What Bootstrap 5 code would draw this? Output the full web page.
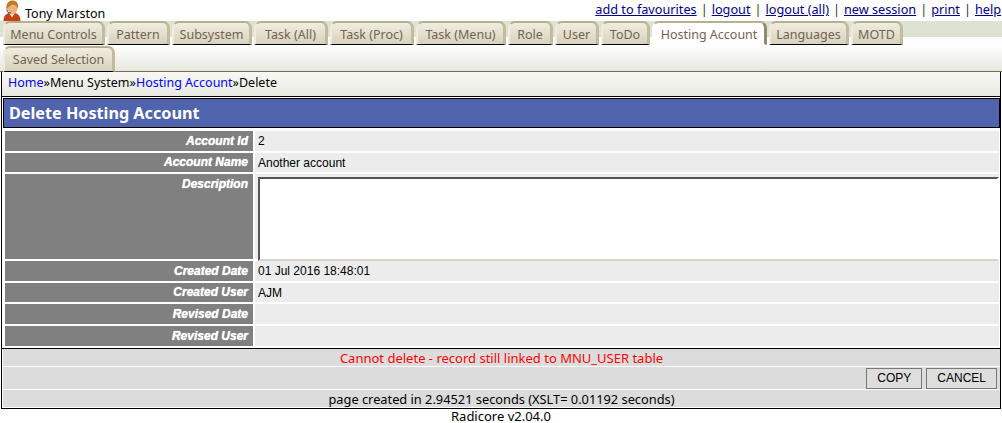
<!DOCTYPE html>
<html lang="en">
<head>
<meta charset="utf-8">
<title>Delete Hosting Account</title>
<link rel="stylesheet" href="https://cdn.jsdelivr.net/npm/bootstrap@5.3.0/dist/css/bootstrap.min.css">
<style>
html,body{background:#fff;}
body{font-family:"Noto Sans","DejaVu Sans",sans-serif;font-size:12.5px;line-height:16px;color:#000;height:423px;overflow:hidden;}
.topline{height:21px;}
.who{padding-left:3px;}
.who span{margin-left:4px;padding-top:6px;}
.toplinks{padding-right:1px;padding-top:1px;font-size:12.7px;}
.toplinks a{color:#00008b;}
.toplinks i{font-style:normal;margin:0 4px;color:#333;}
.tabstrip{position:relative;height:51px;background:linear-gradient(#dde3d3 0,#dde3d3 16px,#fff 16px,#fff 24px);background-repeat:no-repeat;background-size:100% 24px;}
.tabrow{position:relative;z-index:1;height:24px;padding-left:3px;}
.tabrow2{position:relative;z-index:1;height:26px;padding-left:3px;margin-top:1px;}
.tabitem{height:24px;padding:4px 0 0;margin-right:2px;color:#716353;text-align:center;white-space:nowrap;border-radius:7px 7px 0 0;border-style:solid;border-width:2px 3px 1px 2px;border-color:#b8ae90 #c4bb9c #000 #efebdf;background:linear-gradient(#f0ede1,#d8d2bb);}
.tabitem.active{background:#fff;border-color:#b8ae90 #8f8a70 #fff #fff;}
.tabrow2 .tabitem{height:26px;padding-top:4px;width:112px;}
.tabrow .tabitem:nth-child(1){width:102px;}
.tabrow .tabitem:nth-child(2){width:63px;}
.tabrow .tabitem:nth-child(3){width:80px;}
.tabrow .tabitem:nth-child(4){width:74px;}
.tabrow .tabitem:nth-child(5){width:84px;}
.tabrow .tabitem:nth-child(6){width:90px;}
.tabrow .tabitem:nth-child(7){width:45px;}
.tabrow .tabitem:nth-child(8){width:44px;}
.tabrow .tabitem:nth-child(9){width:49px;}
.tabrow .tabitem:nth-child(10){width:115px;}
.tabrow .tabitem:nth-child(11){width:80px;}
.tabrow .tabitem:nth-child(12){width:52px;}
.panel1{position:absolute;left:0;right:0;top:24px;height:27px;background:linear-gradient(#fff,#e6e8df);border-bottom:1px solid #7b6c58;z-index:0;}
.crumbs{height:24px;margin:0 1px 0 1px;padding:3px 0 0 6px;border-right:1px solid #000;border-left:1px solid #000;background:linear-gradient(#f8f8f4,#e8eae1);}
.crumbs a{color:#0000ff;text-decoration:none;}
.mainbox{margin:0 0 0 1px;width:1000px;height:313px;border:1px solid #000;}
.titlebar{height:30px;margin:1px 0 0 1px;width:997px;background:#4f64ad;border:1px solid #000;color:#fff;font-weight:700;font-size:16.2px;padding:6px 0 0 5px;}
.fields{padding:3px 1px 0 3px;}
.frow{display:flex;gap:2px;margin-bottom:2px;height:20px;font-family:"Liberation Sans",Arial,sans-serif;font-size:12px;}
.frow.slim{height:19px;}
.frow.tall{height:85px;}
.flabel{width:248px;background:#808080;color:#fff;font-weight:700;font-style:italic;text-align:right;padding:2px 5px 0 0;text-shadow:0 0 1px #fff;}
.frow.slim .flabel{padding-top:1px;}
.fvalue{flex:1;background:#ececec;padding:2px 0 0 3px;}
.descbox{height:84px;margin:1px 0 0 0;background:#fff;border:2px solid;border-color:#555 #fff #d8d4c8 #555;}
.msgbar{margin-top:1px;border-top:1px solid #000;}
.msg,.btnbar,.stats{background:#dcdcdc;margin-left:1px;}
.msg{height:17px;color:#f00;text-align:center;font-size:13px;line-height:18px;}
.btnbar{height:22px;margin-top:1px;gap:4px;padding-right:3px;}
.actbtn{height:21px;padding:0 10px;font-family:"Liberation Sans",Arial,sans-serif;font-size:12px;line-height:19px;color:#000;background:#dedede;border:1px solid #777;border-radius:0;}
.actbtn:hover{background:#dedede;color:#000;border-color:#777;}
.stats{height:17px;margin-top:1px;text-align:center;font-size:12.8px;line-height:18px;}
.foot{text-align:center;height:14px;line-height:14px;font-size:13px;}
</style>
</head>
<body>
<div class="topline d-flex justify-content-between">
  <div class="who d-flex">
    <svg width="18" height="21" viewBox="0 0 18 21" aria-hidden="true">
      <path d="M0.500 21c0-5 2.500-7.500 6-8l2.500 2 2.500-2c3.500.5 6 3 6 8z" fill="#c8401a"/>
      <path d="M6 13l3 4.500 3-4.500-3 1.500z" fill="#f2e8d8"/>
      <ellipse cx="9.500" cy="8" rx="5" ry="6" fill="#eeb078"/>
      <path d="M3.500 10C2.500 3 6 .5 9.500 .5S16 3 15 9c-1-2.500-2.500-4-5-4.500C7.500 5 5 7 3.500 10z" fill="#c07c20"/>
      <path d="M4 9.500c0 3 1.500 3.500 4 3.500" fill="none" stroke="#444" stroke-width="1"/>
    </svg>
    <span>Tony Marston</span>
  </div>
  <div class="toplinks"><a href="#">add to favourites</a><i>|</i><a href="#">logout</a><i>|</i><a href="#">logout (all)</a><i>|</i><a href="#">new session</a><i>|</i><a href="#">print</a><i>|</i><a href="#">help</a></div>
</div>
<div class="tabstrip">
  <div class="panel1"></div>
  <div class="tabrow d-flex">
    <div class="tabitem">Menu Controls</div><div class="tabitem">Pattern</div><div class="tabitem">Subsystem</div><div class="tabitem">Task (All)</div><div class="tabitem">Task (Proc)</div><div class="tabitem">Task (Menu)</div><div class="tabitem">Role</div><div class="tabitem">User</div><div class="tabitem">ToDo</div><div class="tabitem active">Hosting Account</div><div class="tabitem">Languages</div><div class="tabitem">MOTD</div>
  </div>
  <div class="tabrow2 d-flex">
    <div class="tabitem">Saved Selection</div>
  </div>
</div>
<div class="crumbs"><a href="#">Home</a>»Menu System»<a href="#">Hosting Account</a>»Delete</div>
<div class="mainbox">
  <div class="titlebar">Delete Hosting Account</div>
  <div class="fields">
    <div class="frow"><div class="flabel">Account Id</div><div class="fvalue">2</div></div>
    <div class="frow slim"><div class="flabel">Account Name</div><div class="fvalue">Another account</div></div>
    <div class="frow tall"><div class="flabel">Description</div><div class="fvalue"><div class="descbox"></div></div></div>
    <div class="frow"><div class="flabel">Created Date</div><div class="fvalue">01 Jul 2016 18:48:01</div></div>
    <div class="frow slim"><div class="flabel">Created User</div><div class="fvalue">AJM</div></div>
    <div class="frow"><div class="flabel">Revised Date</div><div class="fvalue"></div></div>
    <div class="frow"><div class="flabel">Revised User</div><div class="fvalue"></div></div>
  </div>
  <div class="msgbar">
    <div class="msg">Cannot delete - record still linked to MNU_USER table</div>
    <div class="btnbar d-flex justify-content-end align-items-center">
      <button type="button" class="btn actbtn">COPY</button>
      <button type="button" class="btn actbtn">CANCEL</button>
    </div>
    <div class="stats">page created in 2.94521 seconds (XSLT= 0.01192 seconds)</div>
  </div>
</div>
<div class="foot">Radicore v2.04.0</div>
<script src="https://cdn.jsdelivr.net/npm/bootstrap@5.3.0/dist/js/bootstrap.bundle.min.js"></script>
</body>
</html>
